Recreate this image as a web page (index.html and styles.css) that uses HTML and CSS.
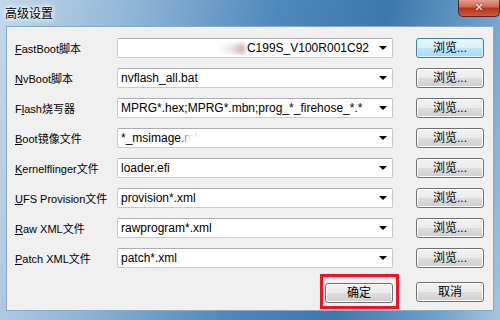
FILE: index.html
```html
<!DOCTYPE html>
<html>
	<head>
		<meta charset="utf-8">
		<link rel="stylesheet" href="styles.css">
	</head>
	<body>
		<div class="window">
			<div class="titlebar">
				<span class="title">高级设置</span>
				<span class="close">&#x2715;</span>
			</div>
			<div class="client">
				<div class="row">
					<span class="label"><u>F</u>astBoot脚本</span>
					<div class="combo right"><span class="val"><i class="blur"></i>C199S_V100R001C92</span><b class="arrow"></b></div>
					<span class="btn hot">浏览...</span>
				</div>
				<div class="row">
					<span class="label"><u>N</u>vBoot脚本</span>
					<div class="combo"><span class="val">nvflash_all.bat</span><b class="arrow"></b></div>
					<span class="btn">浏览...</span>
				</div>
				<div class="row">
					<span class="label">F<u>l</u>ash烧写器</span>
					<div class="combo"><span class="val">MPRG*.hex;MPRG*.mbn;prog_*_firehose_*.*</span><b class="arrow"></b></div>
					<span class="btn">浏览...</span>
				</div>
				<div class="row">
					<span class="label"><u>B</u>oot镜像文件</span>
					<div class="combo"><span class="val">*_msimage.mb<i class="smear"></i></span><b class="arrow"></b></div>
					<span class="btn">浏览...</span>
				</div>
				<div class="row">
					<span class="label"><u>K</u>ernelflinger文件</span>
					<div class="combo"><span class="val">loader.efi</span><b class="arrow"></b></div>
					<span class="btn">浏览...</span>
				</div>
				<div class="row">
					<span class="label"><u>U</u>FS Provision文件</span>
					<div class="combo"><span class="val">provision*.xml</span><b class="arrow"></b></div>
					<span class="btn">浏览...</span>
				</div>
				<div class="row">
					<span class="label"><u>R</u>aw XML文件</span>
					<div class="combo"><span class="val">rawprogram*.xml</span><b class="arrow"></b></div>
					<span class="btn">浏览...</span>
				</div>
				<div class="row">
					<span class="label"><u>P</u>atch XML文件</span>
					<div class="combo"><span class="val">patch*.xml</span><b class="arrow"></b></div>
					<span class="btn">浏览...</span>
				</div>
				<div class="footer">
					<div class="mark"><span class="btn">确定</span></div>
					<span class="btn">取消</span>
				</div>
			</div>
		</div>
	</body>
</html>
```

FILE: styles.css
```css
body {
	margin: 0;
	font-family: "Liberation Sans", "Noto Sans CJK SC", sans-serif;
	font-size: 12px;
	color: #000;
}

.window {
	width: 500px;
	height: 320px;
	box-sizing: border-box;
	padding: 0 6px 9px 6px;
	display: flex;
	flex-direction: column;
	background: linear-gradient(100deg, #c3d8ea 0%, #8db4d6 25%, #4f89bb 50%, #3d78ab 70%, #6d9fc9 88%, #a7c5df 100%);
	overflow: hidden;
}

/* 타이틀바 */
.titlebar {
	height: 26px;
	position: relative;
	flex-shrink: 0;
}

.title {
	position: absolute;
	left: -1px;
	top: 4px;
	font-size: 12px;
	text-shadow: 0 0 6px #fff, 0 0 6px #fff, 0 0 3px #fff;
}

.close {
	position: absolute;
	right: -6px;
	top: -1px;
	width: 42px;
	height: 18px;
	box-sizing: border-box;
	border: 1px solid #5b2222;
	border-top: none;
	border-radius: 0 0 5px 5px;
	background: linear-gradient(#e7a797 0%, #d16b55 45%, #b8341c 55%, #cc5a3a 100%);
	color: #fff;
	font-family: "DejaVu Sans", sans-serif;
	font-weight: bold;
	font-size: 11px;
	line-height: 17px;
	text-align: center;
	text-shadow: 0 0 2px #400;
}

.client {
	flex: 1;
	background: #f0f0f0;
	border: 1px solid #8aa9c4;
	padding: 11px 9px 0 8px;
	display: flex;
	flex-direction: column;
	gap: 10px;
}

.row {
	display: flex;
	align-items: center;
	height: 20px;
}

.label {
	width: 102px;
	white-space: nowrap;
	font-size: 11px;
}

.combo {
	width: 276px;
	height: 20px;
	box-sizing: border-box;
	background: #fff;
	border: 1px solid #c5c8cf;
	border-top-color: #abadb3;
	border-radius: 2px;
	display: flex;
	align-items: center;
	padding-left: 3px;
	position: relative;
	overflow: hidden;
}

.combo .val {
	flex: 1;
	white-space: nowrap;
	overflow: hidden;
	position: relative;
}

.combo.right .val {
	text-align: right;
	padding-right: 4px;
}

.arrow {
	width: 0;
	height: 0;
	border-left: 4px solid transparent;
	border-right: 4px solid transparent;
	border-top: 4px solid #000;
	margin: 0 5px 0 6px;
	flex-shrink: 0;
}

/* 모자이크 처리된 부분 */
.blur {
	display: inline-block;
	width: 28px;
	height: 10px;
	margin-right: 2px;
	vertical-align: middle;
	background: linear-gradient(90deg, #fff, #e9e9ee 50%, #c9a6a0);
	filter: blur(2px);
}

.smear {
	position: absolute;
	left: 64px;
	top: 0;
	width: 80px;
	height: 26px;
	background: #fff;
	filter: blur(3px);
}

.btn {
	margin-left: auto;
	width: 68px;
	height: 20px;
	box-sizing: border-box;
	border: 1px solid #707070;
	border-radius: 3px;
	background: linear-gradient(#f2f2f2 0%, #ebebeb 50%, #dddddd 51%, #cfcfcf 100%);
	box-shadow: inset 0 0 0 1px #fcfcfc;
	text-align: center;
	line-height: 18px;
	flex-shrink: 0;
}

.btn.hot {
	border-color: #3c7fb1;
	background: linear-gradient(#eaf6fd 0%, #d9f0fc 50%, #bee6fd 51%, #a7d9f5 100%);
	box-shadow: inset 0 0 0 1px #d6f0fb;
}

.footer {
	display: flex;
	justify-content: flex-end;
	align-items: center;
	gap: 17px;
	margin-top: -4px;
}

.footer .btn {
	margin-left: 0;
}

.mark {
	border: 3px solid #f0141e;
	padding: 6px 3px 3px 2px;
	display: flex;
}
```
